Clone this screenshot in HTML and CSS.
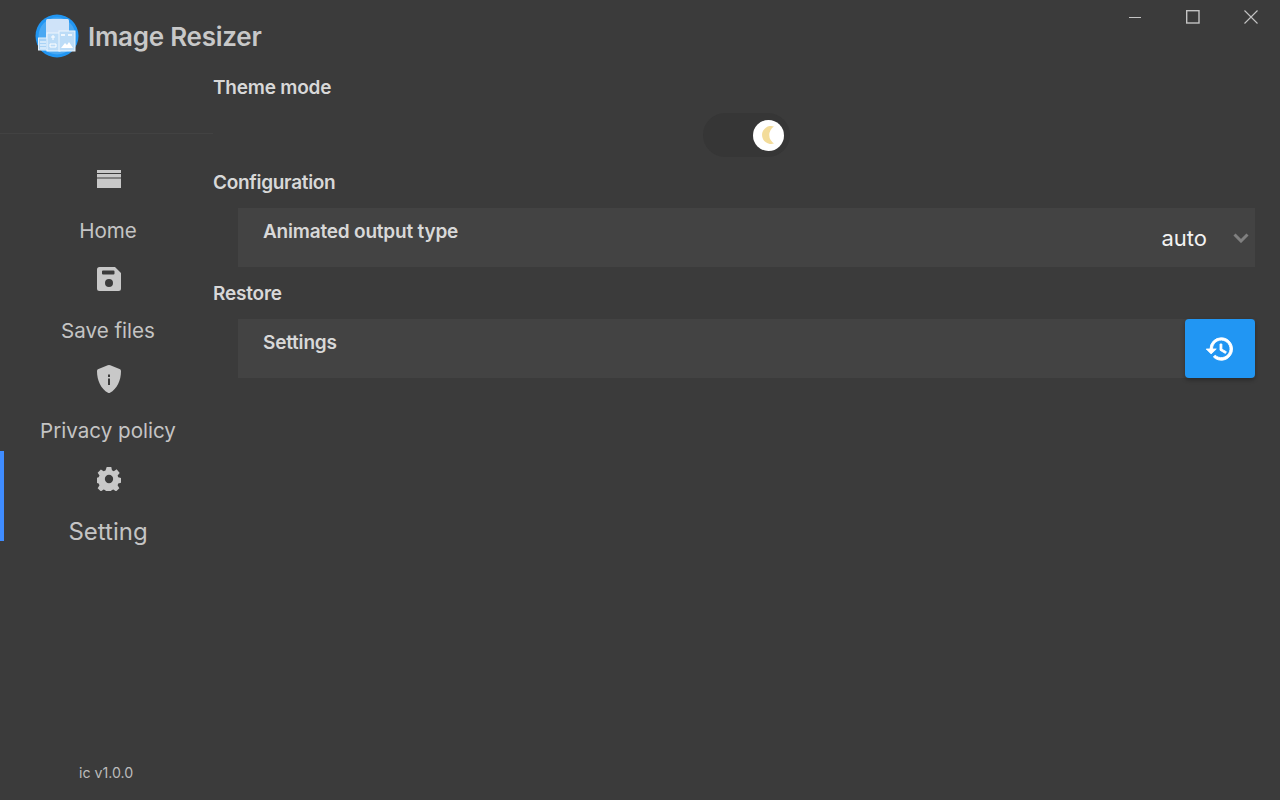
FILE: index.html
```html
<!DOCTYPE html>
<html lang="en">
<head>
<meta charset="utf-8">
<title>Image Resizer</title>
<link rel="stylesheet" href="styles.css">
</head>
<body>
<div class="app">
  <aside class="sidebar">
    <div class="brand">
      <svg class="logo" width="44" height="44" viewBox="0 0 44 44">
        <circle cx="22" cy="22" r="21.5" fill="#2196f3"/>
        <circle cx="22" cy="22" r="18.5" fill="#4aa8f2"/>
        <rect x="11" y="5" width="23" height="28" rx="1.5" fill="#cfe3f9"/>
        <rect x="3.5" y="24" width="9" height="12" fill="#a9d3f6" stroke="#e4f1fc" stroke-width="1"/>
        <rect x="12" y="19" width="13" height="18" fill="#bcdcf7" stroke="#eef6fd" stroke-width="1"/>
        <rect x="24" y="17" width="16" height="20" fill="#bcdcf7" stroke="#eef6fd" stroke-width="1"/>
        <path d="M16 23h4M18 21v5M15 30h6v3h-6z" stroke="#fff" stroke-width="1" fill="none"/>
        <path d="M26 34l4-5 2 2 2-3 4 6z" fill="#fff"/>
        <path d="M26 21h4M33 21h4" stroke="#fff" stroke-width="1.500"/>
        <path d="M5 28h6M5 31h6M5 34h6" stroke="#fff" stroke-width="1"/>
      </svg>
      <span class="brand-name">Image Resizer</span>
    </div>
    <nav class="nav">
      <a class="nav-item">
        <span class="nav-icon">
          <svg width="24" height="18" viewBox="0 0 24 18"><path d="M0 0h24v3H0zM0 4h24v3.500H0zM0 8.500h24V18H0z" fill="#c8c8c8"/></svg>
        </span>
        <span class="nav-label">Home</span>
      </a>
      <a class="nav-item">
        <span class="nav-icon">
          <svg width="24" height="24" viewBox="0 0 24 24"><path fill-rule="evenodd" d="M2.500 0h15.500L24 6v15.500a2.500 2.500 0 0 1-2.500 2.500h-19A2.500 2.500 0 0 1 0 21.500v-19A2.500 2.500 0 0 1 2.500 0zM6 3.500a1 1 0 0 0-1 1v2a1 1 0 0 0 1 1h10.500a1 1 0 0 0 1-1v-2a1 1 0 0 0-1-1zM12 12a4 4 0 1 0 0 8 4 4 0 0 0 0-8z" fill="#c8c8c8"/></svg>
        </span>
        <span class="nav-label">Save files</span>
      </a>
      <a class="nav-item">
        <span class="nav-icon">
          <svg width="24" height="28" viewBox="0 0 24 28"><path fill-rule="evenodd" d="M12 0c1 0 1.600.3 2.500.7l8 3.300C23.400 4.400 24 5.200 24 6.200c0 9-4 17.800-11 21.500-.6.300-1.400.3-2 0C4 24 0 15.200 0 6.200c0-1 .6-1.800 1.500-2.200l8-3.300C10.400.3 11 0 12 0zM11 9.500v2.500h2V9.500zM11 13.500v6.500h2v-6.500z" fill="#c8c8c8"/></svg>
        </span>
        <span class="nav-label">Privacy policy</span>
      </a>
      <a class="nav-item active">
        <span class="nav-icon">
          <svg width="24" height="24" viewBox="0 0 26 26"><path fill-rule="evenodd" d="M10.500 0h5l.7 3.600 2 .9 3.100-2 3.300 3.900-2.300 2.700.7 2.100 3 .8v5l-3 .8-.7 2.100 1.900 3-3.500 3.500-3-2-2.100.9-.7 3.500h-5l-.7-3.500-2-.9-3 2-3.500-3.500 2-3-.9-2.100-3.500-.8v-5l3.500-.8.900-2.100-2-3 3.500-3.500 3 2 2-.9zM13 8.500a4.500 4.500 0 1 0 0 9 4.500 4.500 0 0 0 0-9z" fill="#c8c8c8"/></svg>
        </span>
        <span class="nav-label nav-label-active">Setting</span>
      </a>
    </nav>
    <div class="version">ic v1.0.0</div>
  </aside>
  <main class="main">
    <div class="window-controls">
      <svg class="win-btn" width="14" height="14" viewBox="0 0 14 14"><path d="M1 7.500h12" stroke="#c4c4c4" stroke-width="1"/></svg>
      <svg class="win-btn" width="14" height="14" viewBox="0 0 14 14"><rect x=".7" y=".7" width="12.300" height="12.300" fill="none" stroke="#c4c4c4" stroke-width="1.400"/></svg>
      <svg class="win-btn" width="14" height="14" viewBox="0 0 14 14"><path d="M.5.500l13 13M13.500.500l-13 13" stroke="#c4c4c4" stroke-width="1.100"/></svg>
    </div>
    <h2 class="section-title">Theme mode</h2>
    <div class="toggle-row">
      <div class="toggle">
        <span class="knob">
          <svg width="16" height="18" viewBox="0 0 16 18"><path d="M13 .5A9 9 0 1 0 13 17.500 10 10 0 0 1 13 .5z" fill="#f3dc9a"/></svg>
        </span>
      </div>
    </div>
    <h2 class="section-title title-config">Configuration</h2>
    <section class="card">
      <span class="card-title">Animated output type</span>
      <div class="select">
        <span class="select-value">auto</span>
        <svg width="16" height="10" viewBox="0 0 16 10"><path d="M1.500 1.500 8 8l6.500-6.500" fill="none" stroke="#808080" stroke-width="3"/></svg>
      </div>
    </section>
    <h2 class="section-title title-restore">Restore</h2>
    <section class="card">
      <span class="card-title">Settings</span>
      <button class="restore-btn" type="button" aria-label="Restore settings">
        <svg width="30" height="30" viewBox="0 0 24 24"><path d="M13 3a9 9 0 0 0-9 9H1l3.900 3.900L9 12H6a7 7 0 1 1 2.100 4.900l-1.400 1.500A9 9 0 1 0 13 3zm-1 5v5l4.300 2.500.8-1.300-3.600-2.100V8z" fill="#fff" stroke="#fff" stroke-width=".7"/></svg>
      </button>
    </section>
  </main>
</div>
</body>
</html>
```
FILE: styles.css
```css
* { box-sizing: border-box; }
html, body { margin: 0; height: 100%; }
body {
  background: #3b3b3b;
  color: #d0d0d0;
  font-family: Inter, "Open Sans", "Liberation Sans", sans-serif;
  overflow: hidden;
}
.app { display: flex; width: 1280px; height: 800px; }

.sidebar {
  width: 213px;
  flex: none;
  display: flex;
  flex-direction: column;
}
.brand {
  height: 134px;
  border-bottom: 1px solid #424242;
  display: flex;
  align-items: flex-start;
  padding: 14px 0 0 35px;
  gap: 9px;
}
.logo { flex: none; }
.brand-name {
  font-size: 26px;
  font-weight: 600;
  color: #c8c8c8;
  line-height: 46px;
  letter-spacing: -0.25px;
  white-space: nowrap;
}
.nav {
  display: flex;
  flex-direction: column;
  padding-top: 17px;
  padding-left: 3px;
  flex: 1;
}
.nav-item {
  height: 100px;
  display: flex;
  flex-direction: column;
  align-items: center;
  position: relative;
}
.nav-item.active::before {
  content: "";
  position: absolute;
  left: -3px;
  top: 0;
  width: 4px;
  height: 90px;
  background: #3f8cff;
}
.nav-icon {
  height: 56px;
  margin-bottom: 9px;
  padding-left: 1px;
  display: flex;
  align-items: center;
  justify-content: center;
}
.nav-label {
  font-size: 20.6px;
  line-height: 30px;
  color: #c4c4c4;
}
.nav-label-active { font-size: 24px; line-height: 32px; }
.version {
  height: 36px;
  font-size: 14.2px;
  color: #bcbcbc;
  padding-left: 79px;
}

.main {
  flex: 1;
  min-width: 0;
  display: flex;
  flex-direction: column;
  padding-right: 25px;
}
.window-controls {
  height: 73px;
  margin-right: -25px;
  display: flex;
  justify-content: flex-end;
  align-items: flex-start;
  gap: 44px;
  padding: 10px 22px 0 0;
}
.section-title {
  margin: 0;
  font-size: 19px;
  font-weight: 600;
  line-height: 30px;
  color: #d8d8d8;
  letter-spacing: -0.2px;
}
.toggle-row {
  height: 65px;
  padding: 10px 0 0 490px;
}
.toggle {
  width: 87px;
  height: 44px;
  border-radius: 22px;
  background: #363636;
  display: flex;
  align-items: center;
  justify-content: flex-end;
  padding-right: 6px;
}
.knob {
  width: 31px;
  height: 31px;
  border-radius: 50%;
  background: #fff;
  display: flex;
  align-items: center;
  justify-content: center;
}
.card {
  margin-left: 25px;
  height: 59px;
  background: #434343;
  display: flex;
  justify-content: space-between;
  padding-left: 25px;
  position: relative;
}
.title-config { margin-bottom: 10px; letter-spacing: -0.3px; }
.title-restore { margin-top: 12px; margin-bottom: 10px; }
.card-title {
  font-size: 19px;
  font-weight: 600;
  line-height: 47px;
  color: #d8d8d8;
  letter-spacing: -0.2px;
}
.select {
  display: flex;
  align-items: center;
  gap: 26px;
  padding: 0 6px 0 0;
}
.select-value { font-size: 22px; color: #f2f2f2; }
.restore-btn {
  width: 70px;
  height: 59px;
  border: 0;
  padding: 0;
  border-radius: 4px;
  background: #2196f3;
  box-shadow: 0 2px 4px rgba(0, 0, 0, 0.3);
  display: flex;
  align-items: center;
  justify-content: center;
}
```
